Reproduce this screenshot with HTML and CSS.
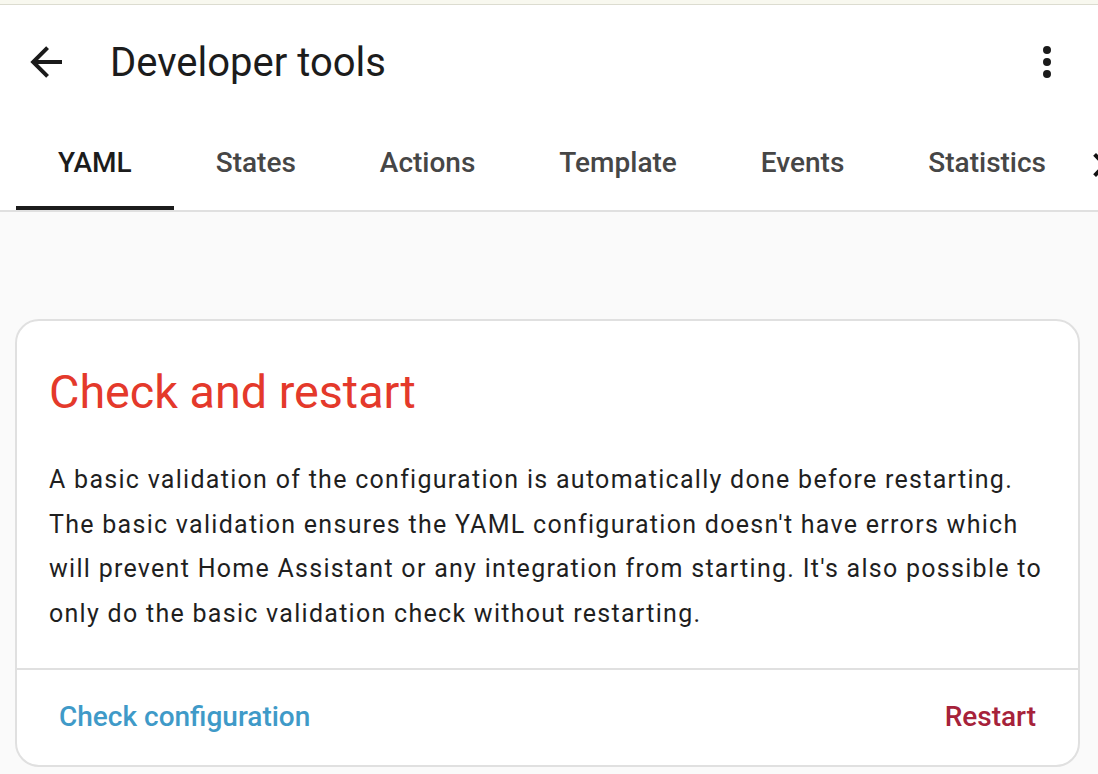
FILE: index.html
```html
<!DOCTYPE html>
<html lang="en">
<head>
<meta charset="utf-8">
<title>Developer tools</title>
<link rel="stylesheet" href="styles.css">
</head>
<body>
<div class="topstrip"></div>
<header class="header">
  <div class="toolbar">
    <svg class="icon back" viewBox="0 0 24 24" width="48" height="48"><path d="M20,11V13H8L13.5,18.5L12.08,19.92L4.16,12L12.08,4.08L13.5,5.5L8,11H20Z"/></svg>
    <div class="title">Developer tools</div>
    <svg class="icon menu" viewBox="0 0 24 24" width="48" height="48"><path d="M12,16A2,2 0 0,1 14,18A2,2 0 0,1 12,20A2,2 0 0,1 10,18A2,2 0 0,1 12,16M12,10A2,2 0 0,1 14,12A2,2 0 0,1 12,14A2,2 0 0,1 10,12A2,2 0 0,1 12,10M12,4A2,2 0 0,1 14,6A2,2 0 0,1 12,8A2,2 0 0,1 10,6A2,2 0 0,1 12,4Z"/></svg>
  </div>
  <nav class="tabs">
    <div class="tab active">YAML</div>
    <div class="tab">States</div>
    <div class="tab">Actions</div>
    <div class="tab">Template</div>
    <div class="tab">Events</div>
    <div class="tab">Statistics</div>
    <svg class="chev" viewBox="0 0 24 24" width="48" height="48"><path d="M8.59,16.58L13.17,12L8.59,7.41L10,6L16,12L10,18L8.59,16.58Z"/></svg>
  </nav>
</header>
<main class="content">
  <section class="card">
    <h1 class="card-title">Check and restart</h1>
    <p class="card-text">A basic validation of the configuration is automatically done before restarting. The basic validation ensures the YAML configuration doesn't have errors which will prevent Home Assistant or any integration from starting. It's also possible to only do the basic validation check without restarting.</p>
    <div class="card-actions">
      <span class="btn btn-check">Check configuration</span>
      <span class="btn btn-restart">Restart</span>
    </div>
  </section>
</main>
</body>
</html>
```
FILE: styles.css
```css
html, body {
  margin: 0;
  padding: 0;
}
body {
  background: #fafafa;
  font-family: Roboto, "Noto Sans", sans-serif;
  color: #212121;
  width: 1098px;
  height: 774px;
  overflow: hidden;
}
.topstrip {
  height: 4px;
  background: #f8f8ef;
  border-bottom: 1px solid #dcdcd0;
}
.header {
  background: #fff;
}
.toolbar {
  height: 113px;
  display: flex;
  align-items: center;
  padding: 0 27px 0 22px;
}
.icon {
  fill: #1a1a1a;
  flex: none;
}
.title {
  font-size: 40px;
  font-weight: 400;
  margin-left: 40px;
  flex: 1;
  color: #1c1c1c;
  padding-top: 1px;
}
.tabs {
  display: flex;
  height: 92px;
  padding-left: 16px;
  border-bottom: 2px solid #e0e0e0;
  overflow: hidden;
}
.tab {
  flex: none;
  display: flex;
  align-items: center;
  padding: 0 42px 4px;
  font-size: 28px;
  font-weight: 500;
  color: #464646;
}
.tab.active {
  color: #1c1c1c;
  box-shadow: inset 0 -4px 0 #1c1c1c;
}
.chev {
  flex: none;
  align-self: center;
  margin-left: -12px;
  margin-top: 2px;
  fill: #111;
}
.content {
  padding: 107px 18px 0 15px;
}
.card {
  background: #fff;
  border: 2px solid #e0e0e0;
  border-radius: 24px;
  height: 448px;
  box-sizing: border-box;
  display: flex;
  flex-direction: column;
}
.card-title {
  margin: 0;
  font-size: 46.7px;
  font-weight: 400;
  color: #e4392b;
  padding: 43px 32px 0 32px;
  line-height: 56px;
}
.card-text {
  margin: 0;
  padding: 38px 32px 0 32px;
  font-size: 25px;
  letter-spacing: 1.28px;
  line-height: 44.5px;
  color: #1f1f1f;
}
.card-actions {
  margin-top: auto;
  border-top: 2px solid #e0e0e0;
  height: 97px;
  box-sizing: border-box;
  display: flex;
  align-items: center;
  justify-content: space-between;
  padding: 0 42px 2px 42px;
}
.btn {
  font-size: 28px;
  font-weight: 500;
}
.btn-check {
  color: #3f9ac8;
}
.btn-restart {
  color: #a6223a;
}
```
